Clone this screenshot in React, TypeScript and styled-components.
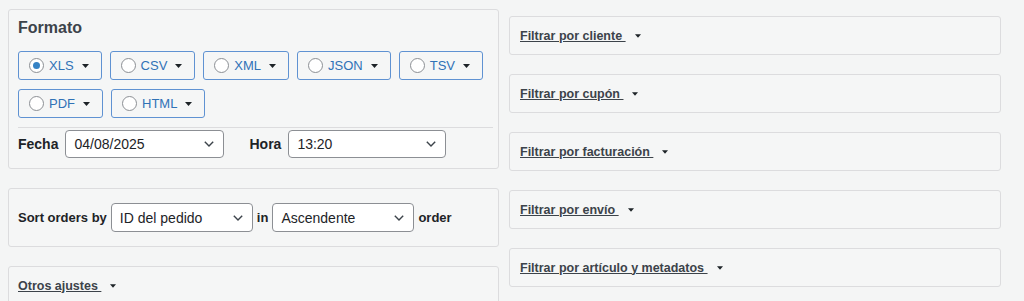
import styled, { createGlobalStyle } from 'styled-components';

const GlobalStyle = createGlobalStyle`
	body {
		margin: 0;
		background: #f4f5f5;
		font-family: "Liberation Sans", Arial, sans-serif;
		color: #1d2327;
	}
`;

const Page = styled.div`
	display: flex;
	gap: 10px;
	padding: 9px 23px 0 8px;
	height: 301px;
	box-sizing: border-box;
	overflow: hidden;
`;

const Column = styled.div<{ $width?: number; $top?: number }>`
	display: flex;
	flex-direction: column;
	gap: 19px;
	width: ${({ $width }) => ($width ? `${$width}px` : 'auto')};
	flex: ${({ $width }) => ($width ? 'none' : '1')};
	padding-top: ${({ $top }) => $top || 0}px;
`;

const Panel = styled.div<{ $pad?: string }>`
	border: 1px solid #dcdcde;
	border-radius: 3px;
	background: #f5f6f6;
	padding: ${({ $pad }) => $pad || '0 9px'};
	box-sizing: border-box;
`;

const Title = styled.div`
	font-size: 16px;
	line-height: 20px;
	font-weight: bold;
	color: #3c434a;
	margin-bottom: 13px;
`;

const FormatGrid = styled.div`
	display: flex;
	flex-wrap: wrap;
	column-gap: 8px;
	row-gap: 9px;
`;

const FormatButton = styled.div`
	display: flex;
	align-items: center;
	height: 29px;
	box-sizing: border-box;
	padding: 0 12px 0 10px;
	border: 1px solid #5f92d2;
	border-radius: 3px;
	color: #3072b6;
	font-size: 13px;
`;

const Radio = styled.span<{ $checked?: boolean }>`
	width: 15px;
	height: 15px;
	box-sizing: border-box;
	border-radius: 50%;
	border: 1px solid #8c8f94;
	background: #fff;
	margin-right: 5px;
	display: flex;
	align-items: center;
	justify-content: center;
	&::after {
		content: '';
		width: 7px;
		height: 7px;
		border-radius: 50%;
		background: ${({ $checked }) => ($checked ? '#3582c4' : 'transparent')};
	}
`;

const Caret = ({ w = 7, color = '#1d2327' }: { w?: number; color?: string }) => (
	<svg width={w} height={4} viewBox="0 0 7 4" style={{ flex: 'none' }}>
		<path d="M0 0 L7 0 L3.5 4 Z" fill={color} />
	</svg>
);

const ButtonCaret = styled.span`
	display: flex;
	margin-left: 8px;
`;

const Separator = styled.div`
	height: 1px;
	background: #dcdcde;
	margin: 9px -4px 2px 0;
`;

const Row = styled.div<{ $gap?: number }>`
	display: flex;
	align-items: center;
	gap: ${({ $gap }) => $gap ?? 6}px;
`;

const Label = styled.span<{ $size?: number; $space?: number }>`
	font-size: ${({ $size }) => $size || 14}px;
	font-weight: bold;
	color: #1d2327;
	margin-left: ${({ $space }) => $space || 0}px;
`;

const SelectBox = styled.div<{ $width: number; $height?: number }>`
	width: ${({ $width }) => $width}px;
	height: ${({ $height }) => $height || 28}px;
	box-sizing: border-box;
	display: flex;
	align-items: center;
	justify-content: space-between;
	padding: 0 9px 0 8px;
	background: #fff;
	border: 1px solid #8c8f94;
	border-radius: 4px;
	font-size: 14px;
	color: #1d2327;
`;

const Chevron = () => (
	<svg width="10" height="6" viewBox="0 0 10 6">
		<path d="M0.8 0.8 L5 5 L9.2 0.8" fill="none" stroke="#3c434a" strokeWidth="1.4" />
	</svg>
);

const Select = ({ value, width, height }: { value: string; width: number; height?: number }) => (
	<SelectBox $width={width} $height={height}>
		<span>{value}</span>
		<Chevron />
	</SelectBox>
);

const TogglePanel = styled(Panel)`
	height: 39px;
	flex: none;
	display: flex;
	align-items: center;
`;

const ToggleText = styled.span`
	font-size: 12.5px;
	font-weight: bold;
	color: #3c434a;
	text-decoration: underline;
	white-space: pre;
	margin-right: 9px;
`;

const Toggle = ({ label, pad }: { label: string; pad?: string }) => (
	<TogglePanel $pad={pad}>
		<ToggleText>{label + ' '}</ToggleText>
		<Caret w={6} color="#1d2327" />
	</TogglePanel>
);

const formats = ['XLS', 'CSV', 'XML', 'JSON', 'TSV', 'PDF', 'HTML'];
const filters = [
	'Filtrar por cliente',
	'Filtrar por cupón',
	'Filtrar por facturación',
	'Filtrar por envío',
	'Filtrar por artículo y metadatos',
];

export default function App() {
	return (
		<>
			<GlobalStyle />
			<Page>
				<Column $width={491}>
					<Panel $pad="8px 9px 10px 9px">
						<Title>Formato</Title>
						<FormatGrid>
							{formats.map((f, i) => (
								<FormatButton key={f}>
									<Radio $checked={i === 0} />
									{f}
									<ButtonCaret>
										<Caret />
									</ButtonCaret>
								</FormatButton>
							))}
						</FormatGrid>
						<Separator />
						<Row $gap={7}>
							<Label>Fecha</Label>
							<Select value="04/08/2025" width={159} />
							<Label $space={18}>Hora</Label>
							<Select value="13:20" width={158} />
						</Row>
					</Panel>
					<Panel $pad="14px 9px">
						<Row $gap={4}>
							<Label $size={13}>Sort orders by</Label>
							<Select value="ID del pedido" width={142} height={29} />
							<Label $size={13}>in</Label>
							<Select value="Ascendente" width={142} height={29} />
							<Label $size={13}>order</Label>
						</Row>
					</Panel>
					<Toggle label="Otros ajustes" pad="0 9px" />
				</Column>
				<Column $top={7}>
					{filters.map((f) => (
						<Toggle key={f} label={f} pad="0 10px" />
					))}
				</Column>
			</Page>
		</>
	);
}
